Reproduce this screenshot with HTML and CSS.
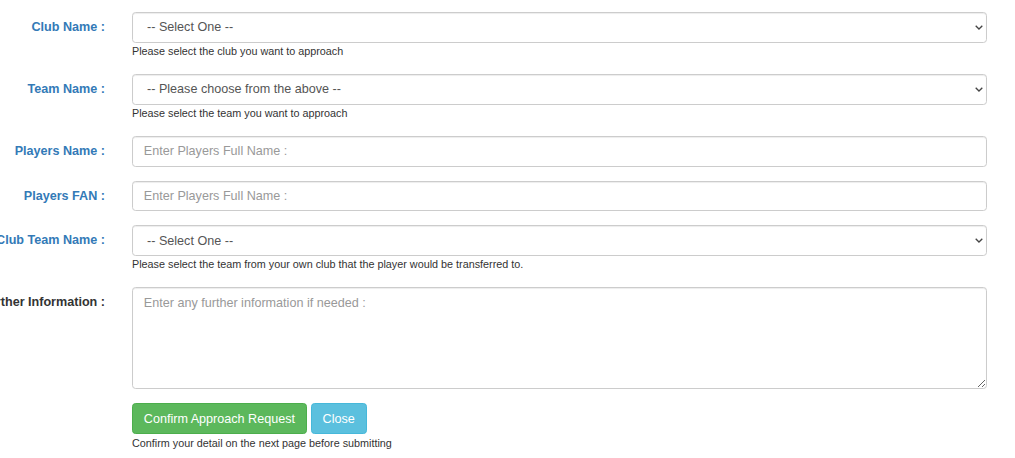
FILE: index.html
```html
<!DOCTYPE html>
<html lang="en">
<head>
<meta charset="utf-8">
<title>Approach Request</title>
<link rel="stylesheet" href="styles.css">
</head>
<body>
<form class="form">
  <div class="group">
    <label class="label">Club Name :</label>
    <div class="field">
      <select class="control select"><option>-- Select One --</option></select>
      <div class="help">Please select the club you want to approach</div>
    </div>
  </div>
  <div class="group">
    <label class="label">Team Name :</label>
    <div class="field">
      <select class="control select"><option>-- Please choose from the above --</option></select>
      <div class="help">Please select the team you want to approach</div>
    </div>
  </div>
  <div class="group">
    <label class="label">Players Name :</label>
    <div class="field">
      <input class="control" type="text" placeholder="Enter Players Full Name :">
    </div>
  </div>
  <div class="group">
    <label class="label">Players FAN :</label>
    <div class="field">
      <input class="control" type="text" placeholder="Enter Players Full Name :">
    </div>
  </div>
  <div class="group">
    <label class="label">Club Team Name :</label>
    <div class="field">
      <select class="control select"><option>-- Select One --</option></select>
      <div class="help">Please select the team from your own club that the player would be transferred to.</div>
    </div>
  </div>
  <div class="group">
    <label class="label label-dark">Further Information :</label>
    <div class="field">
      <textarea class="control textarea" placeholder="Enter any further information if needed :"></textarea>
    </div>
  </div>
  <div class="group">
    <div></div>
    <div class="field">
      <div class="buttons">
        <button type="button" class="btn btn-success">Confirm Approach Request</button>
        <button type="button" class="btn btn-info">Close</button>
      </div>
      <div class="help help-last">Confirm your detail on the next page before submitting</div>
    </div>
  </div>
</form>
</body>
</html>
```
FILE: styles.css
```css
html, body {
  margin: 0;
  padding: 0;
  background: #fff;
}
body {
  font-family: "Liberation Sans", Arial, Helvetica, sans-serif;
  font-size: 12.6px;
  color: #333;
  overflow: hidden;
}
.form {
  padding-top: 12px;
  margin-left: -40px;
}
.group {
  display: grid;
  grid-template-columns: 145px 855px;
  column-gap: 27px;
  margin-bottom: 14px;
}
.label {
  font-weight: bold;
  font-size: 12.6px;
  line-height: 30.6px;
  text-align: right;
  color: #337ab7;
  white-space: nowrap;
}
.label-dark {
  color: #333;
}
.field {
  display: flex;
  flex-direction: column;
}
.control {
  box-sizing: border-box;
  width: 100%;
  height: 30.6px;
  padding: 5.4px 10.8px;
  font-family: "Liberation Sans", Arial, Helvetica, sans-serif;
  font-size: 12.6px;
  line-height: 18px;
  color: #555;
  background-color: #fff;
  border: 1px solid #ccc;
  border-radius: 3.6px;
  box-shadow: inset 0 1px 1px rgba(0, 0, 0, 0.075);
  margin: 0;
}
.control::placeholder {
  color: #999;
  opacity: 1;
}
.select {
  -webkit-appearance: none;
  appearance: none;
  padding-left: 14px;
  background-image: url("data:image/svg+xml,%3Csvg xmlns='http://www.w3.org/2000/svg' width='8' height='5' viewBox='0 0 8 5'%3E%3Cpath d='M0.7 0.7 L4 4 L7.3 0.7' fill='none' stroke='%23444' stroke-width='1.3'/%3E%3C/svg%3E");
  background-repeat: no-repeat;
  background-position: right 3px center;
  background-size: 8px 5px;
}
.textarea {
  height: 102px;
  resize: vertical;
  display: block;
}
.help {
  margin-top: 1.5px;
  margin-bottom: 0.5px;
  font-size: 10.8px;
  line-height: 15.4px;
  color: #333;
}
.help-last {
  margin-top: 2px;
}
.buttons {
  display: flex;
  gap: 4px;
}
.btn {
  font-family: "Liberation Sans", Arial, Helvetica, sans-serif;
  font-size: 12.6px;
  line-height: 18px;
  padding: 5.4px 10.8px;
  border: 1px solid transparent;
  border-radius: 3.6px;
  color: #fff;
  cursor: pointer;
  margin: 0;
}
.btn-success {
  background: #5cb85c;
  border-color: #4cae4c;
}
.btn-info {
  background: #5bc0de;
  border-color: #46b8da;
}
```
